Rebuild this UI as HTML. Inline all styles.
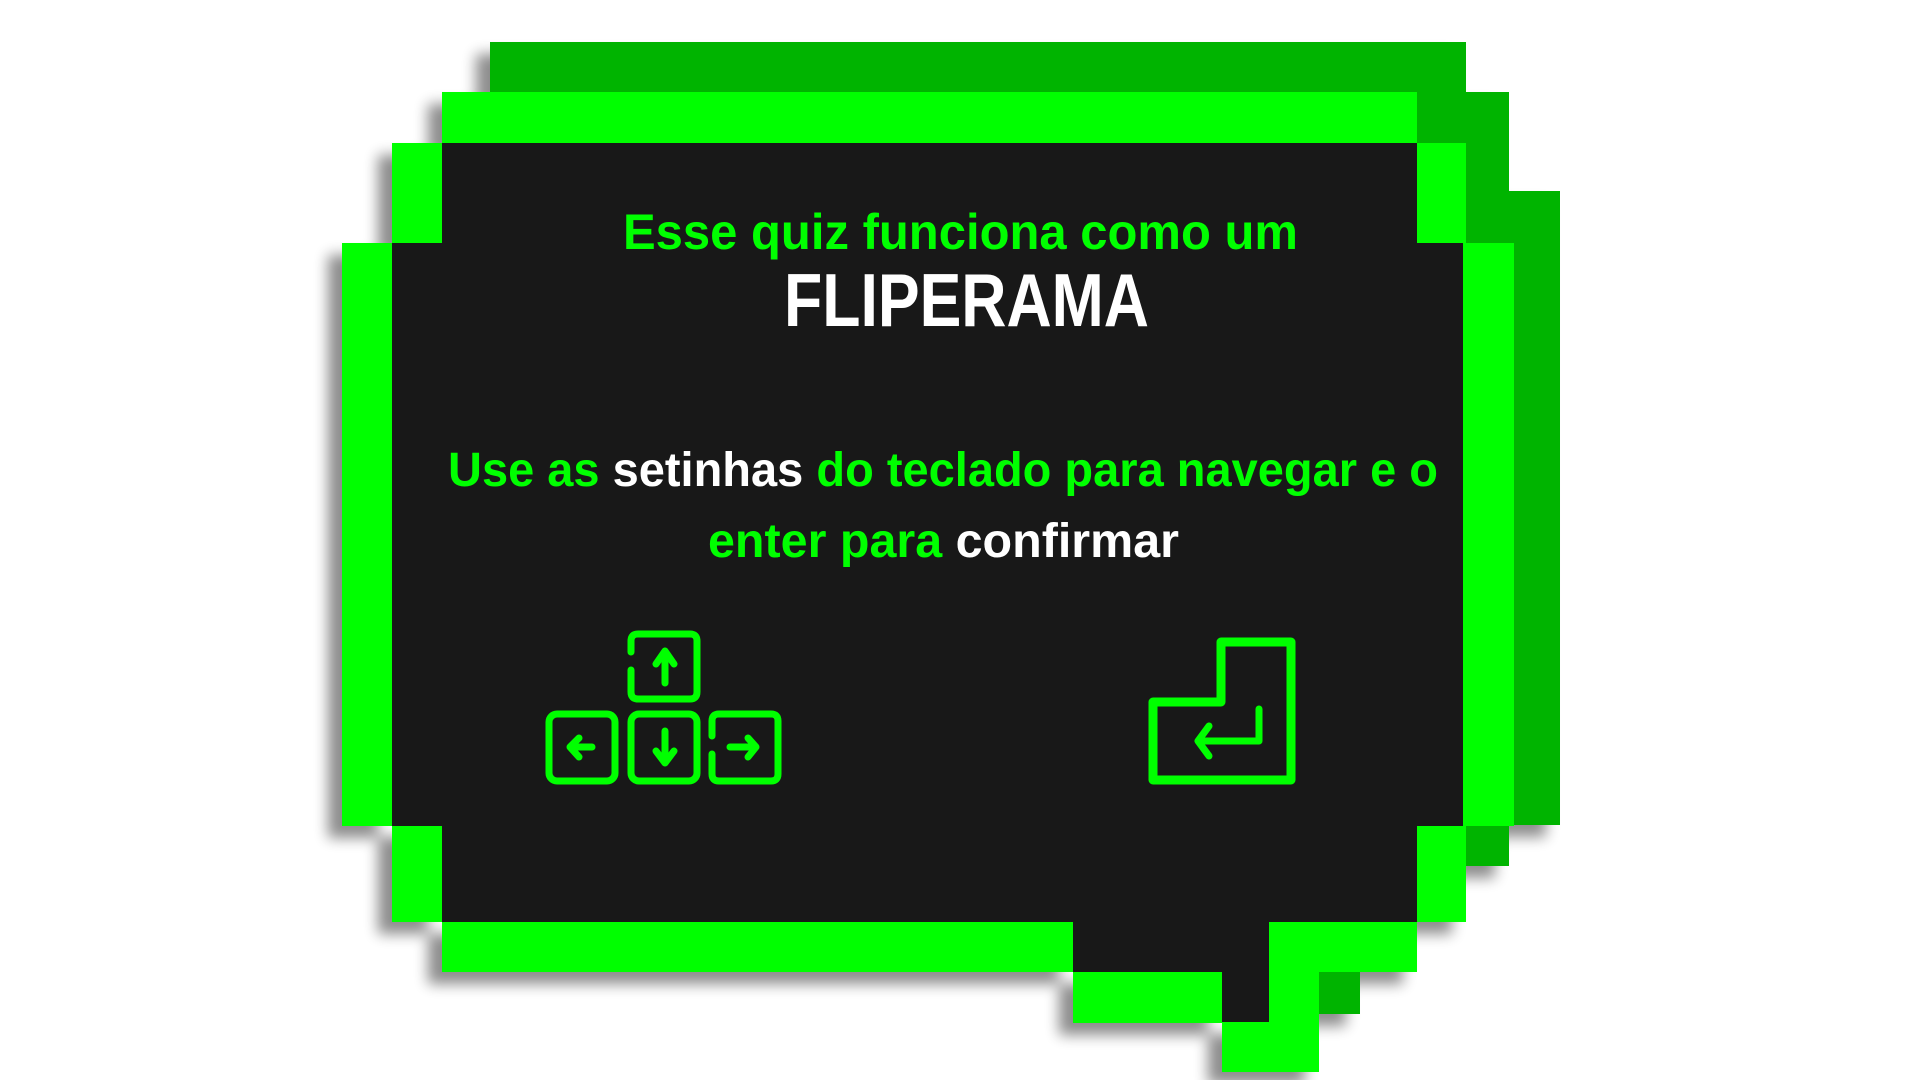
<!DOCTYPE html>
<html><head><meta charset="utf-8"><style>
html,body{margin:0;padding:0;background:#fff;width:1920px;height:1080px;overflow:hidden}
svg{display:block}
</style></head><body>
<svg width="1920" height="1080" viewBox="0 0 1920 1080" xmlns="http://www.w3.org/2000/svg">
<defs>
<filter id="sh" x="-10%" y="-10%" width="130%" height="130%">
<feGaussianBlur in="SourceAlpha" stdDeviation="7"/>
<feOffset dx="-14" dy="12"/>
<feComponentTransfer><feFuncA type="linear" slope="0.45"/></feComponentTransfer>
<feMerge><feMergeNode/><feMergeNode in="SourceGraphic"/></feMerge>
</filter>
</defs>
<g filter="url(#sh)">
<g fill="#00b400">
<rect x="490" y="42" width="976" height="50"/>
<rect x="1417" y="92" width="92" height="774"/>
<rect x="1466" y="191" width="94" height="634"/>
<rect x="1319" y="972" width="41" height="42"/>
</g>
<g fill="#00ff00">
<rect x="442" y="92" width="975" height="51"/>
<rect x="392" y="143" width="50" height="100"/>
<rect x="342" y="243" width="50" height="583"/>
<rect x="392" y="825" width="50" height="97"/>
<rect x="442" y="922" width="631" height="50"/>
<rect x="1073" y="972" width="149" height="51"/>
<rect x="1222" y="1022" width="97" height="50"/>
<rect x="1269" y="922" width="148" height="50"/>
<rect x="1269" y="972" width="50" height="51"/>
<rect x="1417" y="143" width="49" height="100"/>
<rect x="1463" y="243" width="51" height="583"/>
<rect x="1417" y="825" width="49" height="97"/>
</g>
</g>
<g fill="#181818">
<rect x="442" y="143" width="975" height="100"/>
<rect x="392" y="243" width="1071" height="583"/>
<rect x="442" y="825" width="975" height="97"/>
<rect x="1073" y="922" width="196" height="50"/>
<rect x="1222" y="972" width="47" height="50"/>
</g>
<g font-family="Liberation Sans, sans-serif" font-weight="bold">
<text x="623" y="249" font-size="50" fill="#00ff00" textLength="675" lengthAdjust="spacingAndGlyphs">Esse quiz funciona como um</text>
<text x="784" y="326" font-size="75" fill="#ffffff" textLength="365" lengthAdjust="spacingAndGlyphs">FLIPERAMA</text>
<text x="448" y="486" font-size="48" fill="#00ff00" textLength="990" lengthAdjust="spacingAndGlyphs">Use as <tspan fill="#fff">setinhas</tspan> do teclado para navegar e o</text>
<text x="708" y="557" font-size="48" fill="#00ff00" textLength="471" lengthAdjust="spacingAndGlyphs">enter para <tspan fill="#fff">confirmar</tspan></text>
</g>
<g fill="none" stroke="#00ff00" stroke-width="7" stroke-linecap="round" stroke-linejoin="round">
<path d="M631 652 V641 Q631 634 638 634 H690 Q697 634 697 641 V692 Q697 699 690 699 H638 Q631 699 631 692 V670"/>
<rect x="549" y="714" width="66" height="67" rx="8"/>
<rect x="631" y="714" width="66" height="67" rx="8"/>
<path d="M712 754 V774 Q712 781 719 781 H771 Q778 781 778 774 V721 Q778 714 771 714 H719 Q712 714 712 721 V736"/>
<path d="M665 683 V651 M656 664 L665 651 L674 664"/>
<path d="M570 747 H592 M579 738 L570 747 L579 757"/>
<path d="M665 731 V763 M656 751 L665 763 L674 751"/>
<path d="M730 747 H756 M748 738 L756 747 L748 757"/>
</g>
<path d="M1221 642 H1291 V780 H1153 V702 H1221 Z" fill="none" stroke="#00ff00" stroke-width="9" stroke-linejoin="round"/>
<g fill="none" stroke="#00ff00" stroke-width="7" stroke-linecap="round" stroke-linejoin="round">
<path d="M1259 709 V741 H1199 M1209 726 L1198 741 L1209 756"/>
</g>
</svg>
</body></html>
